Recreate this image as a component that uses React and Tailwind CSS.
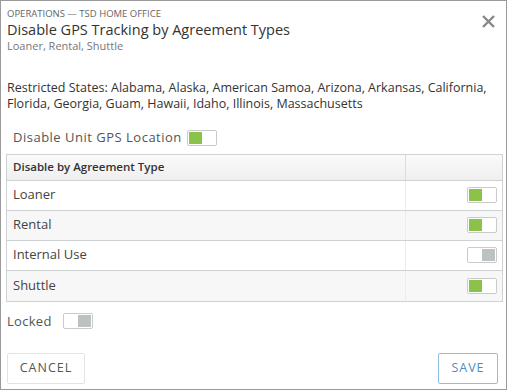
import React, { useState } from "react";

const Toggle = ({ on, onClick }) => (
  <button
    onClick={onClick}
    className="flex h-[16px] w-[30px] rounded-[2px] border border-[#c8cbcc] bg-white p-[1px]"
  >
    {on ? (
      <span className="h-full w-[13px] bg-[#8bc34a]" />
    ) : (
      <span className="ml-auto h-full w-[13px] bg-[#bcc1c2]" />
    )}
  </button>
);

const App = () => {
  const [gps, setGps] = useState(true);
  const [locked, setLocked] = useState(false);
  const [types, setTypes] = useState([
    { name: "Loaner", on: true },
    { name: "Rental", on: true },
    { name: "Internal Use", on: false },
    { name: "Shuttle", on: true },
  ]);

  const flip = (i) =>
    setTypes(types.map((t, j) => (j === i ? { ...t, on: !t.on } : t)));

  return (
    <div
      className="flex h-[390px] w-[507px] flex-col border border-[#9a9a9a] bg-white text-[#444]"
      style={{ fontFamily: '"Open Sans", "Liberation Sans", sans-serif' }}
    >
      {/* header */}
      <div className="flex items-start justify-between pl-[6px] pr-[10px] pt-[6px]">
        <div>
          <div className="text-[9.5px] leading-[14px] text-[#666]">OPERATIONS — TSD HOME OFFICE</div>
          <div className="text-[14.5px] leading-[18px] text-[#333]">Disable GPS Tracking by Agreement Types</div>
          <div className="text-[11px] leading-[14px] text-[#777]">Loaner, Rental, Shuttle</div>
        </div>
        <button className="mt-[7px] text-[#888]">
          <svg width="15" height="15" viewBox="0 0 15 15">
            <path d="M2 2 L13 13 M13 2 L2 13" stroke="currentColor" strokeWidth="2.4" />
          </svg>
        </button>
      </div>

      <p className="mt-[27px] px-[6px] text-[12.5px] leading-[16px] text-[#333]">
        Restricted States: Alabama, Alaska, American Samoa, Arizona, Arkansas, California,
        Florida, Georgia, Guam, Hawaii, Idaho, Illinois, Massachusetts
      </p>

      <div className="mt-[16px] flex items-center gap-[5px] pl-[12px] text-[13px] tracking-[0.5px] text-[#555]">
        <span>Disable Unit GPS Location</span>
        <Toggle on={gps} onClick={() => setGps(!gps)} />
      </div>

      {/* agreement table */}
      <div className="ml-[5px] mr-[3px] mt-[6px] border border-[#cfd2d3] text-[13px]">
        <div className="flex h-[26px] border-b border-[#cfd2d3] bg-gradient-to-b from-[#fafafa] to-[#efefef]">
          <div className="flex flex-1 items-center border-r border-[#dcdcdc] pl-[6px] text-[11.5px] font-semibold text-[#333]">
            Disable by Agreement Type
          </div>
          <div className="w-[96px]" />
        </div>
        {types.map((t, i) => (
          <div
            key={t.name}
            className={`flex h-[30px] items-stretch ${
              i < types.length - 1 ? "border-b border-[#cfd2d3]" : ""
            } ${i % 2 ? "bg-[#f7f7f7]" : "bg-white"}`}
          >
            <div className="flex flex-1 items-center border-r border-[#ececec] pl-[6px] text-[#444]">
              {t.name}
            </div>
            <div className="flex w-[96px] items-center justify-end pr-[5px]">
              <Toggle on={t.on} onClick={() => flip(i)} />
            </div>
          </div>
        ))}
      </div>

      <div className="mt-[10px] flex items-center gap-[11px] pl-[6px] text-[13px] tracking-[0.3px] text-[#555]">
        <span>Locked</span>
        <Toggle on={locked} onClick={() => setLocked(!locked)} />
      </div>

      {/* footer */}
      <div className="mt-auto flex justify-between pb-[5px] pl-[6px] pr-[8px]">
        <button className="h-[31px] w-[78px] rounded-[2px] border border-[#e3e3e3] text-[12.5px] tracking-[1px] text-[#555]">
          CANCEL
        </button>
        <button className="h-[31px] w-[60px] rounded-[2px] border border-[#8fbedf] text-[12.5px] tracking-[1px] text-[#4a8fc4]">
          SAVE
        </button>
      </div>
    </div>
  );
};

export default App;
